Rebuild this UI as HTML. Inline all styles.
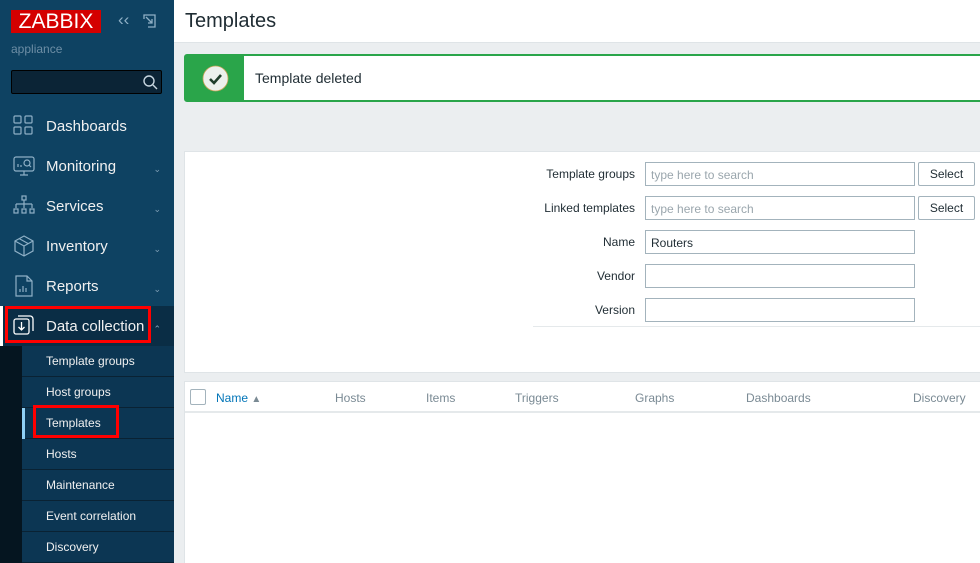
<!DOCTYPE html>
<html><head><style>
*{box-sizing:border-box;margin:0;padding:0}
html,body{width:980px;height:563px;overflow:hidden}
body{font-family:"Liberation Sans",Arial,sans-serif;background:#ebeef0;position:relative}
.sb{position:absolute;left:0;top:0;width:174px;height:563px;background:#0e4262}
.logo{position:absolute;left:11px;top:10px;width:90px;height:23px;background:#d40000;color:#fff;font-size:21px;line-height:24px;text-align:center}
.app{position:absolute;left:11px;top:42px;color:#6d8ea5;font-size:12px}
.search{position:absolute;left:11px;top:70px;width:151px;height:24px;background:#0b2436;border:1px solid #000;border-radius:2px}
.mi{position:absolute;left:0;width:174px;height:40px;color:#f0f0f0;font-size:15px;line-height:42px;padding-left:46px}
.mi .ch{position:absolute;right:13px;top:2px;font-size:9px;color:#7f9fb5}
.mi svg{position:absolute;left:13px;top:9px}
.sub{position:absolute;left:22px;width:152px;height:31px;background:#0c3653;border-bottom:1px solid #0a2233;color:#f0f0f0;font-size:12px;line-height:30px;padding-left:24px}
.red{position:absolute;border:3px solid #f00}
.hdr{position:absolute;left:174px;top:0;right:0;height:43px;background:#fff;border-bottom:1px solid #dfe4e7;font-size:20px;color:#1f2c33;padding:10px 0 0 11px}
.msg{position:absolute;left:184px;top:54px;width:800px;height:48px;border:2px solid #2aa54a;border-radius:3px;background:#fff}
.msg .g{position:absolute;left:0;top:0;width:58px;height:44px;background:#2aa54a}
.msg .t{position:absolute;left:69px;top:14px;font-size:14px;color:#1f2c33}
.panel{position:absolute;left:184px;background:#fff;border:1px solid #dfe4e7}
.lbl{position:absolute;font-size:12px;color:#1f2c33;text-align:right;width:200px}
.inp{position:absolute;left:645px;width:270px;height:24px;border:1px solid #a3b3bc;font-size:12px;padding:5px;color:#1f2c33}
.ph{color:#9aa6ad}
.btn{position:absolute;left:918px;width:57px;height:24px;border:1px solid #a3b3bc;border-radius:2px;font-size:12px;text-align:center;line-height:22px;color:#1f2c33}
.th{position:absolute;top:391px;font-size:12px;color:#7a8a94}
</style></head><body>
<div class="sb">
<div class="logo">ZABBIX</div>
<div style="position:absolute;left:118px;top:10px;color:#8fb0c6;font-size:17px">&lsaquo;&lsaquo;</div>
<svg style="position:absolute;left:143px;top:14px" width="13" height="14" viewBox="0 0 13 14" fill="none" stroke="#8fb0c6" stroke-width="1.3"><path d="M1 5V1h11v12H5M3 3l6 6M9 5v4H5"/></svg>
<div class="app">appliance</div>
<div class="search"><svg style="position:absolute;right:3px;top:3px" width="16" height="16" viewBox="0 0 16 16" fill="none" stroke="#c7d6e0" stroke-width="1.4"><circle cx="7" cy="7" r="5"/><path d="M11 11l4 4"/></svg></div>
<div class="mi" style="top:106px"><svg width="20" height="20" viewBox="0 0 20 20" fill="none" stroke="#8fb0c6" stroke-width="1.2"><rect x="1" y="1" width="7" height="7" rx="1"/><rect x="12" y="1" width="7" height="7" rx="1"/><rect x="1" y="12" width="7" height="7" rx="1"/><rect x="12" y="12" width="7" height="7" rx="1"/></svg>Dashboards</div>
<div class="mi" style="top:146px"><svg width="22" height="22" viewBox="0 0 22 22" fill="none" stroke="#8fb0c6" stroke-width="1.2"><rect x="1" y="2" width="20" height="14" rx="2"/><path d="M7 20h8M11 16v4M5 12V9M8 12v-2"/><circle cx="14" cy="8" r="3"/><path d="M16 10l2 2"/></svg>Monitoring<span class="ch">&#8964;</span></div>
<div class="mi" style="top:186px"><svg width="22" height="22" viewBox="0 0 22 22" fill="none" stroke="#8fb0c6" stroke-width="1.2"><rect x="9" y="1" width="4" height="4"/><path d="M11 5v4M3 9h16M3 9v4M11 9v4M19 9v4"/><rect x="1" y="14" width="4" height="4"/><rect x="9" y="14" width="4" height="4"/><rect x="17" y="14" width="4" height="4"/></svg>Services<span class="ch">&#8964;</span></div>
<div class="mi" style="top:226px"><svg width="22" height="22" viewBox="0 0 22 22" fill="none" stroke="#8fb0c6" stroke-width="1.2"><path d="M11 1l9 5v10l-9 5-9-5V6zM2 6l9 5 9-5M11 11v10M6 3.5l9 5"/></svg>Inventory<span class="ch">&#8964;</span></div>
<div class="mi" style="top:266px"><svg width="22" height="22" viewBox="0 0 22 22" fill="none" stroke="#8fb0c6" stroke-width="1.2"><path d="M3 1h11l5 5v15H3zM14 1v5h5M7 17v-3M10 17v-6M13 17v-4"/></svg>Reports<span class="ch">&#8964;</span></div>
<div class="mi" style="top:306px;background:#0a2d45"><svg width="22" height="22" viewBox="0 0 22 22" fill="none" stroke="#fff" stroke-width="1.3"><rect x="1" y="4" width="15" height="15" rx="2"/><path d="M5 1h12a3 3 0 0 1 3 3v12M8.5 7v8M5.5 12l3 3 3-3"/></svg>Data collection<span class="ch">&#8963;</span></div>
<div style="position:absolute;left:0;top:306px;width:3px;height:40px;background:#fff"></div>
<div style="position:absolute;left:0;top:346px;width:22px;height:217px;background:#051520"></div>
<div class="sub" style="top:346px">Template groups</div>
<div class="sub" style="top:377px">Host groups</div>
<div class="sub" style="top:408px">Templates</div>
<div class="sub" style="top:439px">Hosts</div>
<div class="sub" style="top:470px">Maintenance</div>
<div class="sub" style="top:501px">Event correlation</div>
<div class="sub" style="top:532px">Discovery</div>
<div style="position:absolute;left:22px;top:408px;width:3px;height:31px;background:#8fd0f5"></div>
</div>
<div class="red" style="left:5px;top:306px;width:146px;height:37px"></div>
<div class="red" style="left:33px;top:405px;width:86px;height:33px"></div>
<div class="hdr">Templates</div>
<div class="msg"><div class="g"><svg style="position:absolute;left:16px;top:9px" width="27" height="27" viewBox="0 0 27 27"><circle cx="13.5" cy="13.5" r="12.5" fill="#ecf0ec" stroke="#c9a45a" stroke-width="0.8"/><path d="M8 14l4 4 7-8" fill="none" stroke="#1f3d2a" stroke-width="2.6"/></svg></div><div class="t">Template deleted</div></div>
<div class="panel" style="top:151px;width:800px;height:222px"></div>
<div style="position:absolute;left:533px;top:326px;width:447px;height:1px;background:#e5e9eb"></div>
<div class="lbl" style="left:435px;top:167px">Template groups</div>
<div class="lbl" style="left:435px;top:201px">Linked templates</div>
<div class="lbl" style="left:435px;top:235px">Name</div>
<div class="lbl" style="left:435px;top:269px">Vendor</div>
<div class="lbl" style="left:435px;top:303px">Version</div>
<div class="inp" style="top:162px"><span class="ph">type here to search</span></div>
<div class="inp" style="top:196px"><span class="ph">type here to search</span></div>
<div class="inp" style="top:230px">Routers</div>
<div class="inp" style="top:264px"></div>
<div class="inp" style="top:298px"></div>
<div class="btn" style="top:162px">Select</div>
<div class="btn" style="top:196px">Select</div>
<div class="panel" style="top:381px;width:800px;height:182px;border-bottom:none"></div>
<div style="position:absolute;left:185px;top:411px;width:795px;height:2px;background:#e5e9eb"></div>
<div style="position:absolute;left:190px;top:389px;width:16px;height:16px;border:1px solid #a3b3bc;border-radius:2px"></div>
<div class="th" style="left:216px;color:#0275b8">Name <span style="font-size:10px;color:#7a8a94">&#9650;</span></div>
<div class="th" style="left:335px">Hosts</div>
<div class="th" style="left:426px">Items</div>
<div class="th" style="left:515px">Triggers</div>
<div class="th" style="left:635px">Graphs</div>
<div class="th" style="left:746px">Dashboards</div>
<div class="th" style="left:913px">Discovery</div>
</body></html>
